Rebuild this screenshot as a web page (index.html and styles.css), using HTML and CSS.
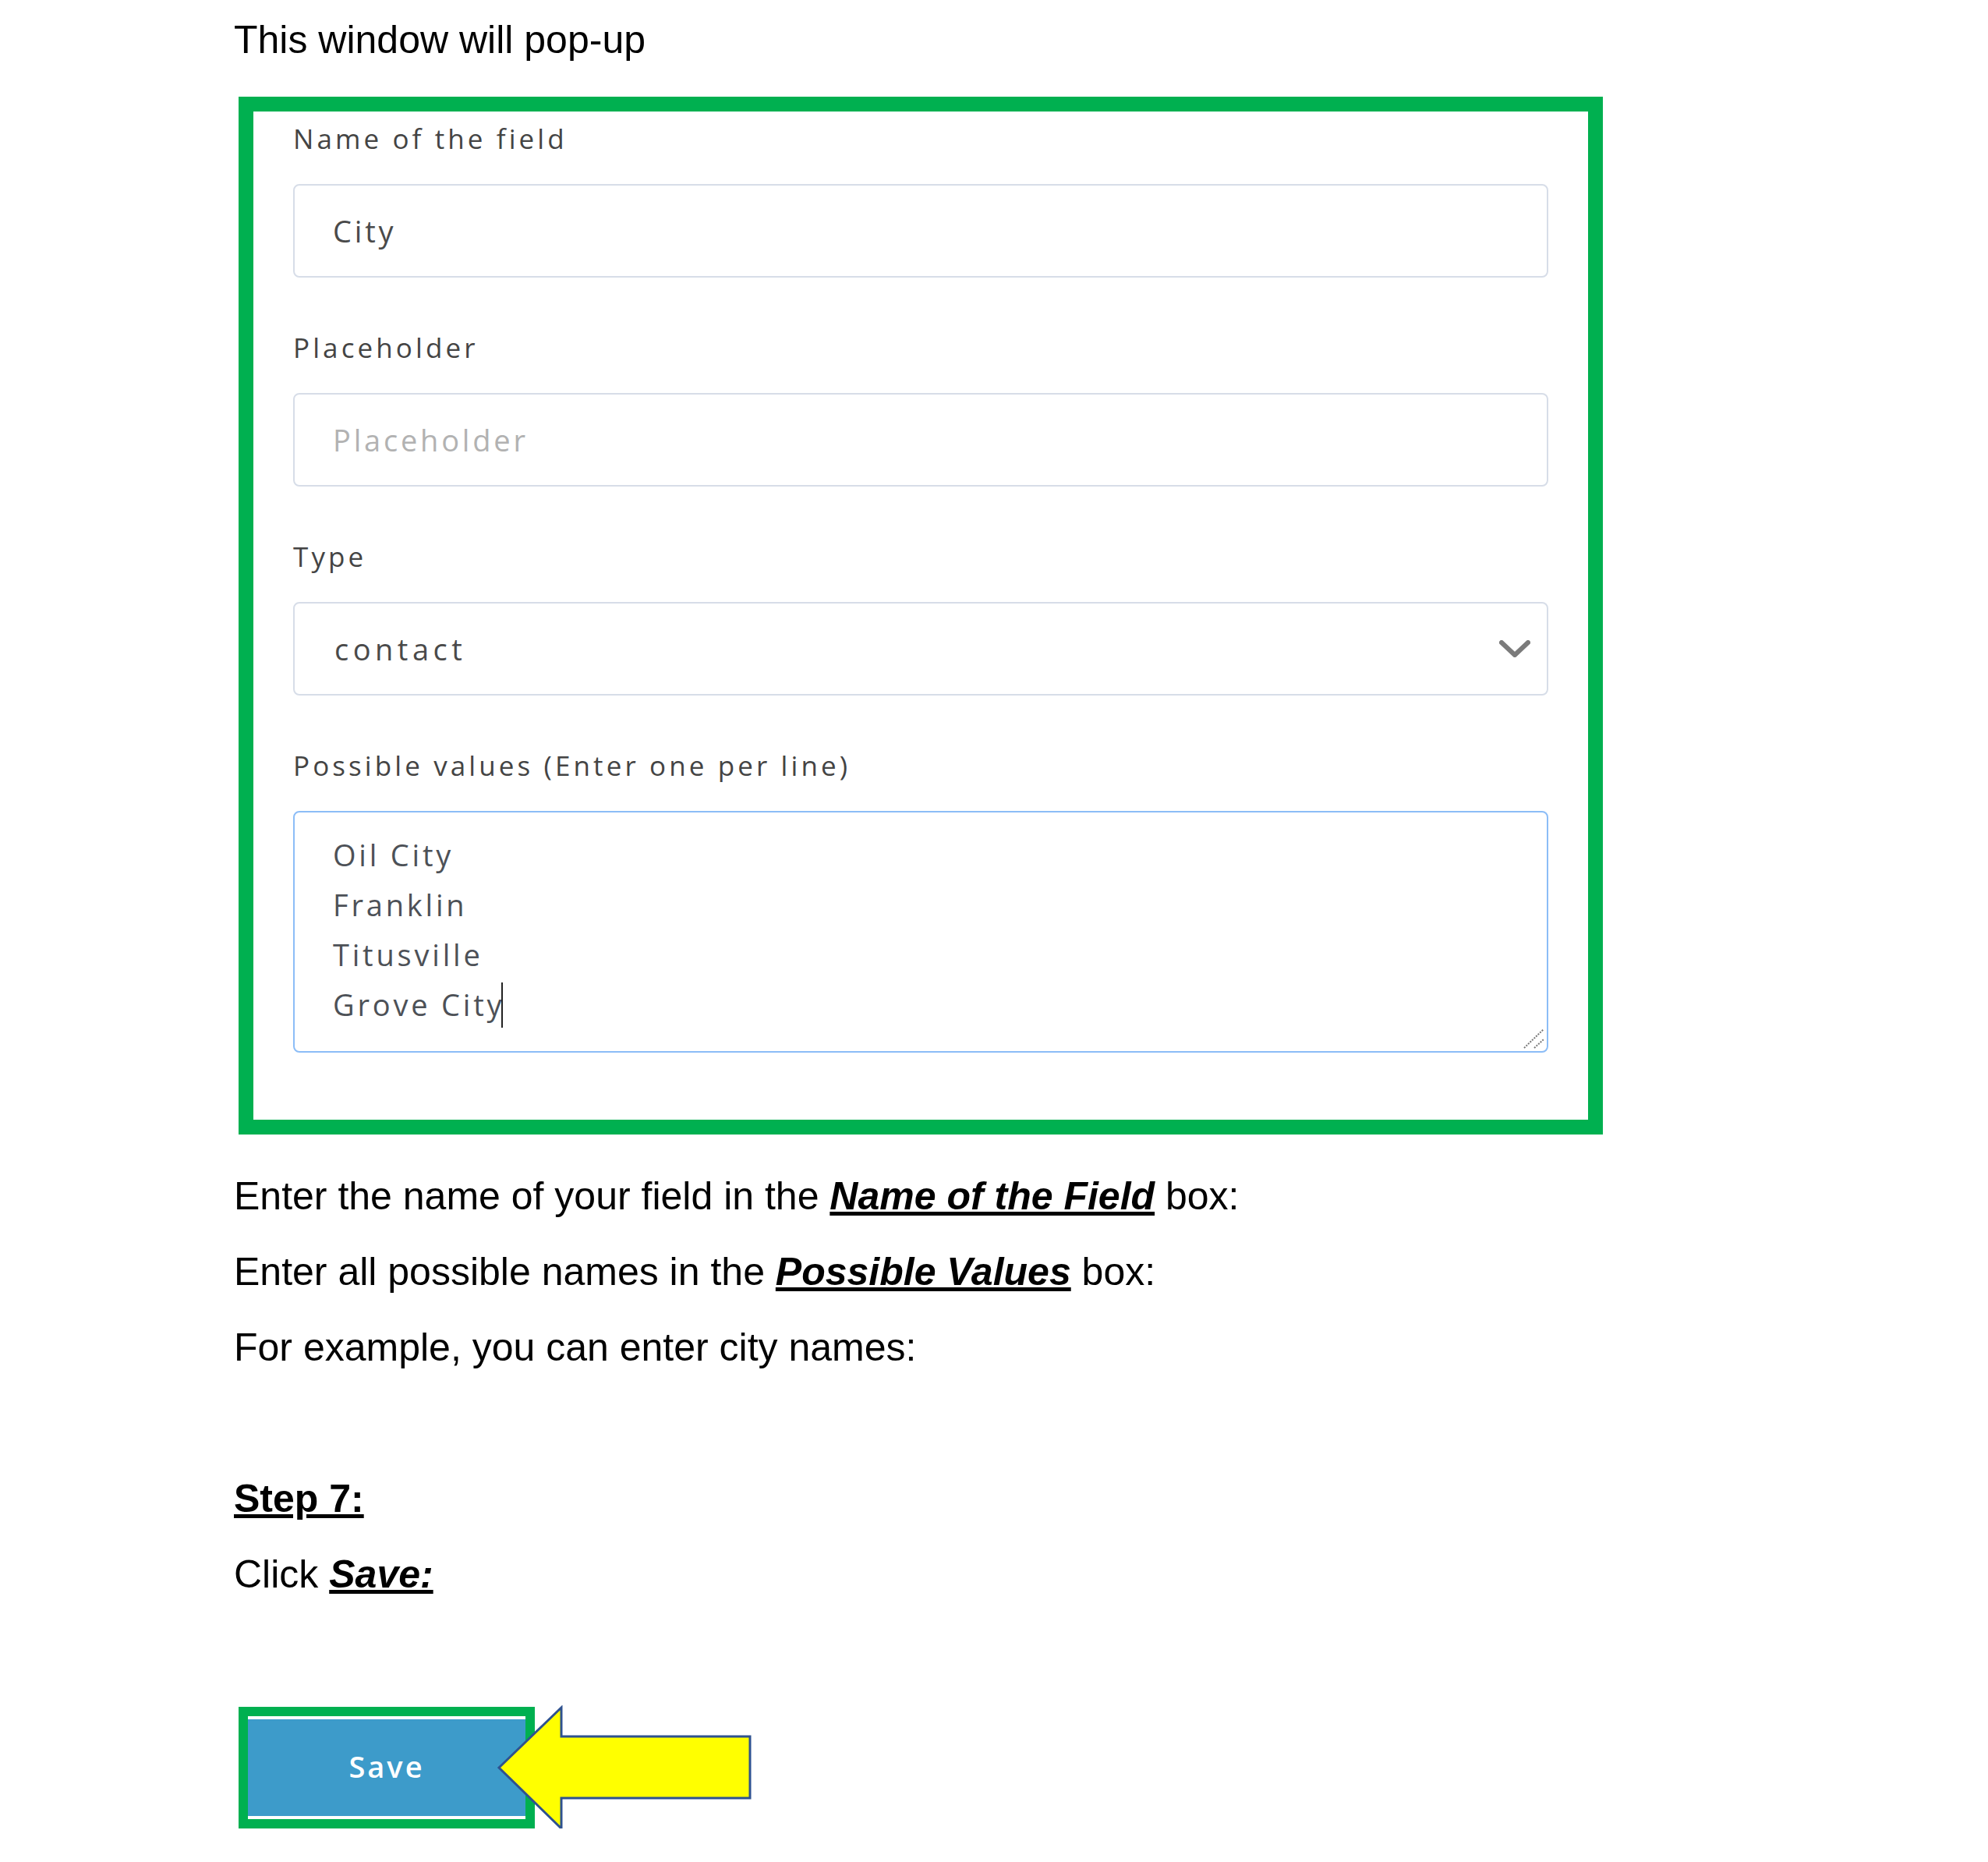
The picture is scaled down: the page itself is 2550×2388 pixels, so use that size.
FILE: index.html
```html
<!DOCTYPE html>
<html lang="en">
<head>
<meta charset="utf-8">
<title>Custom field – Step 7</title>
<link rel="stylesheet" href="styles.css">
</head>
<body>
<main class="doc">
  <p class="line">This window will pop-up</p>

  <section class="dialog">
    <div class="field">
      <div class="label">Name of the field</div>
      <div class="control">City</div>
    </div>
    <div class="field">
      <div class="label">Placeholder</div>
      <div class="control placeholder">Placeholder</div>
    </div>
    <div class="field">
      <div class="label">Type</div>
      <div class="control select">
        <span>contact</span>
        <svg class="chevron" viewBox="0 0 40 22" aria-hidden="true"><polyline points="3,3 20,19 37,3" fill="none" stroke="#7b7b7b" stroke-width="6" stroke-linecap="round" stroke-linejoin="round"/></svg>
      </div>
    </div>
    <div class="field last">
      <div class="label">Possible values (Enter one per line)</div>
      <div class="control textarea">
        <div>Oil City</div>
        <div>Franklin</div>
        <div>Titusville</div>
        <div>Grove City<span class="caret"></span></div>
        <svg class="grip" viewBox="0 0 30 30" aria-hidden="true"><line x1="3" y1="28" x2="28" y2="4" stroke="#777" stroke-width="2" stroke-dasharray="2 1.5"/><line x1="16" y1="28" x2="28" y2="17" stroke="#777" stroke-width="2" stroke-dasharray="2 1.5"/></svg>
      </div>
    </div>
  </section>

  <p class="line after-box">Enter the name of your field in the <span class="emph">Name of the Field</span> box:</p>
  <p class="line">Enter all possible names in the <span class="emph">Possible Values</span> box:</p>
  <p class="line">For example, you can enter city names:</p>
  <p class="line step-line"><span class="step">Step 7:</span></p>
  <p class="line">Click <span class="emph">Save:</span></p>

  <div class="save-row">
    <div class="save"><div class="save-inner">Save</div></div>
    <svg class="arrow" viewBox="0 0 334 162" aria-hidden="true"><polygon points="4,80 84,3 84,40 326,40 326,119 84,119 84,158" fill="#ffff00" stroke="#2f528f" stroke-width="3" stroke-linejoin="miter"/></svg>
  </div>
</main>
</body>
</html>
```

FILE: styles.css
```css
* { box-sizing: border-box; }
html, body { margin: 0; background: #fff; }
body { font-family: "Liberation Sans", Arial, sans-serif; color: #000; }

.doc { padding: 3px 0 0 300px; }

.line { margin: 0; font-size: 50px; line-height: 97px; white-space: nowrap; }
.line.after-box { margin-top: 31px; }
.line.step-line { margin-top: 97px; }

.emph { font-weight: 700; font-style: italic; text-decoration: underline; }
.step { font-weight: 700; text-decoration: underline; }

.dialog {
  margin: 24px 0 0 6px;
  width: 1750px;
  border: 19px solid #00b050;
  padding: 15px 51px 86px;
  background: #fff;
  font-family: "Open Sans", "Noto Sans", sans-serif;
}

.field { margin-bottom: 70px; }
.field.last { margin-bottom: 0; }

.label {
  font-size: 35px;
  line-height: 40px;
  letter-spacing: 4.1px;
  color: #444;
  margin-bottom: 38px;
  white-space: nowrap;
}

.control {
  height: 120px;
  border: 2px solid #d7dde8;
  border-radius: 8px;
  display: flex;
  align-items: center;
  padding: 0 0 0 49px;
  font-size: 38px;
  letter-spacing: 3.8px;
  color: #4a4a4a;
  white-space: nowrap;
}

.placeholder { color: #b2b2b2; }

.select { justify-content: space-between; padding: 0 21px 0 51px; letter-spacing: 5.5px; }
.chevron { width: 40px; height: 22px; flex: none; }

.textarea {
  display: block;
  position: relative;
  height: 310px;
  border-color: #8cbdf7;
  padding-top: 22px;
  line-height: 64px;
  color: #4d5157;
}

.caret {
  display: inline-block;
  width: 2px;
  height: 58px;
  background: #222;
  vertical-align: -15px;
  margin-left: -4px;
}

.grip { position: absolute; right: 2px; bottom: 2px; width: 30px; height: 30px; }

.save-row { position: relative; margin: 121px 0 0 6px; width: 380px; }

.save {
  width: 380px;
  height: 156px;
  border: 12px solid #00b050;
  padding: 4px 0;
  background: #fff;
}

.save-inner {
  height: 100%;
  background: #3d9bca;
  color: #fff;
  display: flex;
  align-items: center;
  justify-content: center;
  font-family: "Open Sans", "Noto Sans", sans-serif;
  font-weight: 600;
  font-size: 38px;
  letter-spacing: 3px;
  padding-bottom: 4px;
}

.arrow { position: absolute; left: 330px; top: -2px; width: 334px; height: 162px; }
```
